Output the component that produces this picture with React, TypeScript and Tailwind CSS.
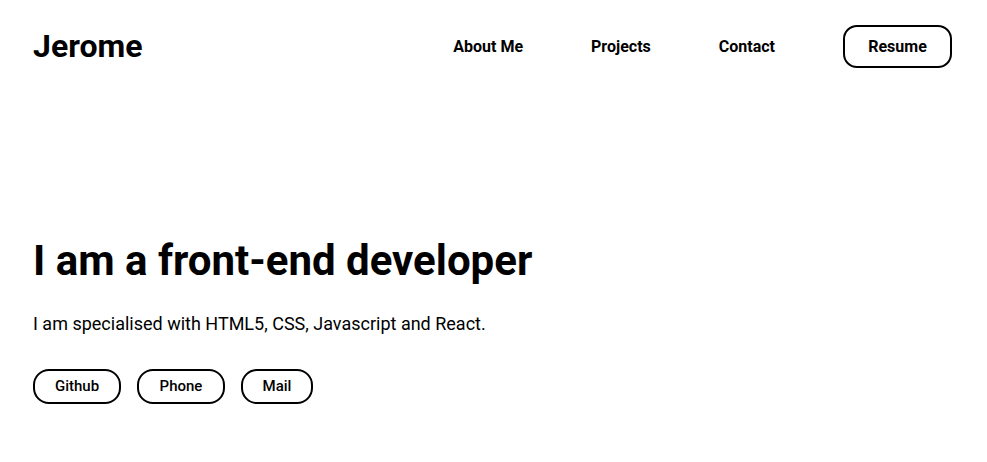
import React from "react";

export default function App() {
  return (
    <div className="min-h-[462px] bg-white text-black" style={{ fontFamily: "Roboto, 'Liberation Sans', sans-serif" }}>
      <header className="flex items-center justify-between pl-[33px] pr-[35px] pt-[25px]">
        <div className="text-[32px] font-bold leading-[43px]">Jerome</div>
        <nav className="flex items-center gap-[68px]">
          <a className="text-[16px] font-bold">About Me</a>
          <a className="text-[16px] font-bold">Projects</a>
          <a className="text-[16px] font-bold">Contact</a>
          <button className="h-[43px] w-[109px] rounded-[14px] border-2 border-black text-[16px] font-bold">Resume</button>
        </nav>
      </header>
      <main className="px-[33px] pt-[168px]">
        <h1 className="text-[42px] font-bold leading-[50px]">I am a front-end developer</h1>
        <p className="mt-[26px] text-[18px] leading-[24px]">I am specialised with HTML5, CSS, Javascript and React.</p>
        <div className="mt-[33px] flex gap-[16px]">
          <button className="h-[35px] w-[88px] rounded-[16px] border-2 border-black text-[15px] font-medium">Github</button>
          <button className="h-[35px] w-[88px] rounded-[16px] border-2 border-black text-[15px] font-medium">Phone</button>
          <button className="h-[35px] w-[72px] rounded-[16px] border-2 border-black text-[15px] font-medium">Mail</button>
        </div>
      </main>
    </div>
  );
}
